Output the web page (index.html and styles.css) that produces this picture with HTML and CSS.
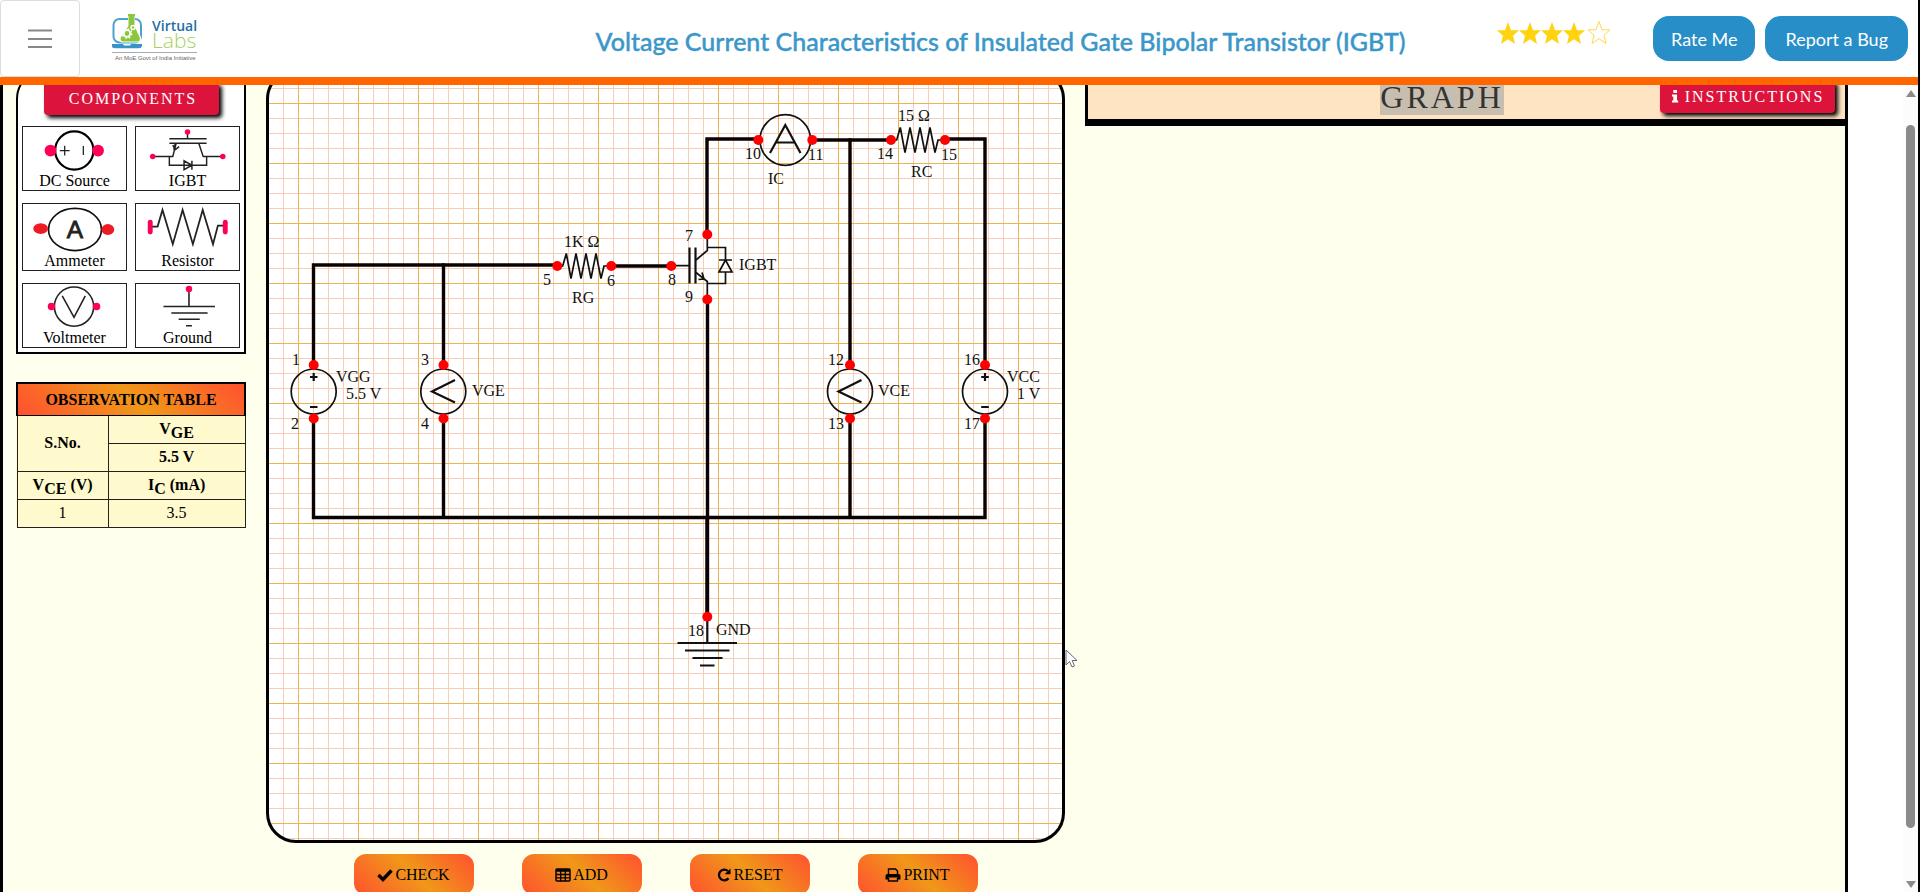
FILE: index.html
```html
<!DOCTYPE html>
<html lang="en">
<head>
<meta charset="utf-8">
<title>Voltage Current Characteristics of Insulated Gate Bipolar Transistor (IGBT)</title>
<link rel="stylesheet" href="styles.css">
</head>
<body>
<header class="topbar">
  <button class="menu-btn" aria-label="Menu">
    <svg width="24" height="20" viewBox="0 0 24 20"><path d="M0 1.5H24M0 10H24M0 18H24" stroke="#888" stroke-width="2"/></svg>
  </button>
  <a class="logo" href="#" aria-label="Virtual Labs">
    <svg width="88" height="52" viewBox="110 12 88 52">
      <rect x="113.500" y="19" width="27.500" height="23.500" rx="6" fill="none" stroke="#4ba3cc" stroke-width="2"/>
      <path d="M112 44H123L124 45.500H130L131 44H142V46Q141.500 48.200 139 48.200H115Q112 48.200 112 46Z" fill="#3a93c6"/>
      <path d="M127 14H136V16H135V26L141 37Q142 42 138 42.500H122Q118 42 120 37L128 26V16H127Z" fill="#fff"/>
      <path d="M128 14H135V16H134.500V26L139.500 37Q141 41.500 137 41.500H123.500Q119.500 41.500 121 37L128.500 26V16H128Z" fill="#8cc63f"/>
      <circle cx="127" cy="33.500" r="3.300" fill="none" stroke="#fff" stroke-width="1.800"/>
      <circle cx="127" cy="33.500" r="4.700" fill="none" stroke="#fff" stroke-width="1.400" stroke-dasharray="1.700 2"/>
      <circle cx="133" cy="27.500" r="2" fill="none" stroke="#fff" stroke-width="1.500"/>
      <text x="152" y="31" class="logo-virtual">Virtual</text>
      <text x="152" y="48" class="logo-labs">Labs</text>
      <path d="M112 52.500H197" stroke="#aaa"/>
      <text x="115" y="60" class="logo-tag">An MoE Govt of India Initiative</text>
    </svg>
  </a>
  <h1 class="title">Voltage Current Characteristics of Insulated Gate Bipolar Transistor (IGBT)</h1>
  <div class="stars" role="img" aria-label="Rated 4 out of 5">
    <svg width="114" height="24" viewBox="0 0 114 24">
      <defs><path id="star" d="M11 0L14 8.300H22L16 13.700L18 22L11 17.200L4 22L6 13.700L0 8.300H8Z"/></defs>
      <g fill="#ffd30f"><use href="#star" x="0" y="1"/><use href="#star" x="22" y="1"/><use href="#star" x="44" y="1"/><use href="#star" x="66" y="1"/></g>
      <use href="#star" x="91" y="0.500" fill="#fff" stroke="#ffd84a"/>
    </svg>
  </div>
  <div class="actions">
    <button class="pill pill-strong">Rate Me</button>
    <button class="pill">Report a Bug</button>
  </div>
</header>

<div class="viewport">
  <main class="lab">
    <aside class="side">
      <section class="components">
        <button class="tag-btn">COMPONENTS</button>
        <div class="parts">
          <figure class="part">
            <svg viewBox="22 126 105 46"><circle cx="74.300" cy="150" r="19.500" fill="#fff" stroke="#000" stroke-width="2.200"/><circle cx="50" cy="150" r="6" fill="#ff0055"/><circle cx="98.500" cy="150" r="6" fill="#ff0055"/><path d="M59.500 150H69.500M64.500 145V155M83.500 145.500V154.500" stroke="#222" stroke-width="1.300"/></svg>
            <figcaption>DC Source</figcaption>
          </figure>
          <figure class="part">
            <svg viewBox="135 126 105 46"><g fill="none" stroke="#222" stroke-width="1.500"><path d="M187.500 131V138M169 138H207M169 142.500H207M154 156H172.500L176 142.500M199 142.500L203.500 156H222M173.500 149L175 143M172.500 144.500L175 149L179 146"/><path d="M169 156V165H207V156M184 160.500V169.500L192 165ZM192 160.500V169.500"/></g><g fill="#ff0055"><circle cx="187.500" cy="131" r="2.800"/><circle cx="152" cy="156" r="2.800"/><circle cx="223.500" cy="156" r="2.800"/></g></svg>
            <figcaption>IGBT</figcaption>
          </figure>
          <figure class="part">
            <svg viewBox="22 203 105 49"><ellipse cx="75" cy="229" rx="27" ry="21.500" fill="#fff" stroke="#111" stroke-width="1.700"/><g fill="#ed1c24"><ellipse cx="40" cy="228" rx="7.500" ry="5.500"/><ellipse cx="108.500" cy="229" rx="6.500" ry="5.500"/></g><text x="75" y="238" class="amp">A</text></svg>
            <figcaption>Ammeter</figcaption>
          </figure>
          <figure class="part">
            <svg viewBox="135 203 105 49"><path d="M150 226H157L162 209L172.500 244L182.500 209L193 244L203 209L213.500 244L218.500 225H224" fill="none" stroke="#222" stroke-width="1.800"/><g fill="#ff0055"><rect x="147" y="219" width="5" height="15" rx="2.500"/><rect x="223.500" y="219" width="5" height="15" rx="2.500"/></g></svg>
            <figcaption>Resistor</figcaption>
          </figure>
          <figure class="part">
            <svg viewBox="22 283 105 46"><circle cx="74" cy="306" r="20" fill="#fff" stroke="#222" stroke-width="1.600"/><path d="M62 295L74 317L85.500 295" fill="none" stroke="#222" stroke-width="1.600"/><circle cx="51" cy="306" r="3.800" fill="#ff0055"/><circle cx="97" cy="306" r="3.800" fill="#ff0055"/></svg>
            <figcaption>Voltmeter</figcaption>
          </figure>
          <figure class="part">
            <svg viewBox="135 283 105 46"><path d="M189 288V306M163 306H215.500M171 312.500H208M178.500 319H200M186 325.500H192" stroke="#222" stroke-width="1.600"/><circle cx="189" cy="288" r="3.300" fill="#ff0055"/></svg>
            <figcaption>Ground</figcaption>
          </figure>
        </div>
      </section>

      <table class="obs">
        <colgroup><col class="c1"><col></colgroup>
        <thead><tr><th colspan="2" class="obs-title">OBSERVATION TABLE</th></tr></thead>
        <tbody>
          <tr><th rowspan="2">S.No.</th><th>V<sub>GE</sub></th></tr>
          <tr><th>5.5 V</th></tr>
          <tr><th>V<sub>CE</sub> (V)</th><th>I<sub>C</sub> (mA)</th></tr>
          <tr><td>1</td><td>3.5</td></tr>
        </tbody>
      </table>
    </aside>

    <section class="bench">
      <div class="canvas">
        <svg class="circuit" viewBox="269 72 793 768">
          <g class="wire">
            <path d="M313.500 365V265H557"/><path d="M443.500 265V365"/><path d="M611 266H671"/>
            <path d="M707 234V139H758"/><path d="M812 140H891"/><path d="M850 365V140"/><path d="M945 139H985V365"/>
            <path d="M313.500 418V517.500H985V418"/><path d="M443.500 418V517"/><path d="M850 418V517"/>
            <path d="M707.500 300V617"/><path d="M707 518V617"/>
          </g>
          <g class="thin">
            <circle cx="313.700" cy="391.500" r="22.500"/><circle cx="443.300" cy="391.500" r="22.500"/><circle cx="850" cy="391.500" r="22.500"/><circle cx="985" cy="391.500" r="22.500"/><circle cx="785.300" cy="140" r="25.300"/>
            <path d="M557 266H562.700L566.300 253.500L571 278.500L576 253.500L581 278.500L586 253.500L591 278.500L596 253.500L601 278.500L604 266H611"/>
            <path d="M891 140H896.700L900.300 127.500L905 152.500L910 127.500L915 152.500L920 127.500L925 152.500L930 127.500L935 152.500L938 140H945"/>
            <path d="M671 265.700H689M696 260L707.300 250.500V234M696 272.500L707.300 281.500V300M707.300 247.500H725.500V260M725.500 272V283.500H707.300M719 272H732L725.500 260ZM719 260H732M698.500 279.500L704 279L702 272.500"/>
          </g>
          <g class="mid">
            <path d="M689.500 247.500V283.500M695.500 247.500V283.500"/>
            <path d="M455 380L432 391.500L455 402.500M861.500 380L838.500 391.500L861.500 402.500"/>
            <path d="M770 153L785.300 125L800.500 153M776 142.500H795"/>
            <path d="M310 377H317.500M313.700 373V381M310 407H317.500M981.200 377H988.800M985 373V381M981.200 407H988.800"/>
            <path d="M707.300 617V643M677.500 643H737M685 650.500H729.500M692.500 658H722.500M700 665.500H714.500"/>
          </g>
          <g class="node">
            <circle cx="313.700" cy="365" r="5"/><circle cx="313.700" cy="418.500" r="5"/><circle cx="443.500" cy="365" r="5"/><circle cx="443.500" cy="418.500" r="5"/>
            <circle cx="557.300" cy="266" r="5"/><circle cx="611.300" cy="266" r="5"/><circle cx="671.300" cy="266" r="5"/><circle cx="707.300" cy="234.500" r="5"/><circle cx="707.300" cy="299.500" r="5"/>
            <circle cx="758.300" cy="140" r="5"/><circle cx="812.300" cy="140" r="5"/><circle cx="850" cy="365" r="5"/><circle cx="850" cy="418.500" r="5"/><circle cx="891" cy="140" r="5"/><circle cx="945" cy="140" r="5"/>
            <circle cx="985" cy="365" r="5"/><circle cx="985" cy="418.500" r="5"/><circle cx="707.300" cy="616.700" r="5"/>
          </g>
          <g class="label">
            <text x="292" y="365">1</text><text x="291" y="429">2</text><text x="336" y="382">VGG</text><text x="346" y="399">5.5 V</text>
            <text x="421" y="365">3</text><text x="421" y="429">4</text><text x="472" y="396">VGE</text>
            <text x="564" y="247">1K Ω</text><text x="543" y="285">5</text><text x="607" y="286">6</text><text x="572" y="303">RG</text>
            <text x="685" y="241">7</text><text x="668" y="285">8</text><text x="685" y="302">9</text><text x="739" y="270">IGBT</text>
            <text x="745" y="159">10</text><text x="808" y="160">11</text><text x="768" y="184">IC</text>
            <text x="877" y="159">14</text><text x="941" y="160">15</text><text x="898" y="121">15 Ω</text><text x="911" y="177">RC</text>
            <text x="828" y="365">12</text><text x="828" y="429">13</text><text x="878" y="396">VCE</text>
            <text x="964" y="365">16</text><text x="964" y="429">17</text><text x="1007" y="382">VCC</text><text x="1017" y="399">1 V</text>
            <text x="688" y="636">18</text><text x="716" y="635">GND</text>
          </g>
        </svg>
        <svg class="cursor" width="14" height="20" viewBox="0 0 14 20" aria-hidden="true"><path d="M1 1V16L4.500 12.500L7 18L9.500 17L7.200 11.500H12Z" fill="#fff" stroke="#667" stroke-width="1"/></svg>
      </div>
      <div class="tools">
        <button class="tool"><svg width="16" height="14" viewBox="0 0 16 14"><path d="M1.500 7L6 11.500L14.500 2.500" fill="none" stroke="#000" stroke-width="3.400"/></svg>CHECK</button>
        <button class="tool"><svg width="16" height="14" viewBox="0 0 16 14"><rect x="1" y="1" width="14" height="12" rx="1" fill="none" stroke="#000" stroke-width="1.500"/><path d="M1 2.500H15" stroke="#000" stroke-width="2.500"/><path d="M1 6.500H15M1 9.800H15M5.700 3V13M10.300 3V13" stroke="#000" stroke-width="1.300"/></svg>ADD</button>
        <button class="tool"><svg width="15" height="14" viewBox="0 0 15 14"><path d="M11.500 10.200A5.300 5.300 0 1 1 10.800 3" fill="none" stroke="#000" stroke-width="2.300"/><path d="M13.500 0.500V6.300H7.700Z"/></svg>RESET</button>
        <button class="tool"><svg width="16" height="14" viewBox="0 0 16 14"><path d="M3.500 7V1H10.500L12.500 3V7M3.500 10V13H12.500V10" fill="none" stroke="#000" stroke-width="1.400"/><path fill-rule="evenodd" d="M2.500 6H13.500Q15.500 6 15.500 8V11.500H12.500V9.500H3.500V11.500H0.500V8Q0.500 6 2.500 6Z"/></svg>PRINT</button>
      </div>
    </section>

    <section class="graph">
      <div class="graph-head">
        <h2><mark>GRAPH</mark></h2>
        <button class="tag-btn info"><svg width="8" height="13" viewBox="0 0 8 13"><path d="M2.300 0H6V3H2.300ZM1 4.500H6V10.500H7.200V12.500H1V10.500H2.300V6.500H1Z" fill="#fff"/></svg>INSTRUCTIONS</button>
      </div>
    </section>
  </main>
  <div class="gutter"></div>
  <div class="scroll" aria-hidden="true">
    <span class="up"></span><span class="thumb"></span><span class="down"></span>
  </div>
</div>
</body>
</html>
```
FILE: styles.css
```css
* { box-sizing: border-box; }
body {
  margin: 0;
  height: 100vh;
  display: flex;
  flex-direction: column;
  overflow: hidden;
  border-right: 2px solid #000;
  background: #fff;
  color: #000;
  font: 16px/18px "Liberation Serif", "Times New Roman", serif;
}
button { font: inherit; cursor: pointer; border: 0; padding: 0; }
svg { display: block; }

/* header */
.topbar {
  flex: none;
  position: relative;
  z-index: 2;
  display: flex;
  align-items: flex-start;
  height: 85px;
  background: #fff;
  border-bottom: 8px solid #ff6600;
  padding-right: 10px;
}
.menu-btn {
  width: 80px;
  height: 77px;
  display: flex;
  align-items: center;
  justify-content: center;
  background: #fff;
  border: 1px solid #ddd;
  border-radius: 4px;
}
.logo { margin: 12px 0 0 30px; }
.logo-virtual { font: 600 14px "Open Sans", sans-serif; fill: #2470a3; }
.logo-labs { font: 300 21px "Open Sans", sans-serif; fill: #a4d160; }
.logo-tag { font: 6px "Liberation Sans", sans-serif; fill: #666; }
.title {
  flex: 1;
  margin: 23px 0 0;
  padding-left: 306px;
  text-align: center;
  font: 500 25px/36px Lato, sans-serif;
  white-space: nowrap;
  color: #3b97c9;
  -webkit-text-stroke: 0.4px #3b97c9;
}
.stars { margin: 21px 42px 0 0; }
.actions { display: flex; gap: 10px; padding-top: 16px; }
.pill {
  height: 45px;
  padding: 0 20px;
  border-radius: 16px;
  background: #288ec8;
  color: #fff;
  font: 18px/20px Lato, sans-serif;
}
.pill-strong { padding: 0 18px; }

/* page body */
.viewport { flex: 1; min-height: 0; display: flex; overflow: hidden; }
.lab {
  flex: 1;
  display: grid;
  grid-template-columns: 230px 799px 1fr;
  column-gap: 20px;
  align-items: start;
  padding-left: 13px;
  border: solid #000;
  border-width: 0 3px;
  background: #ffffee;
}
.side, .bench { margin-top: -16px; }

.components {
  border: 2px solid #000;
  border-radius: 30px 0 0 0;
  background: #fff;
  padding: 11px 4px 4px;
}
.tag-btn {
  display: block;
  width: 175px;
  height: 33px;
  margin: 0 auto 11px 22px;
  padding-left: 3px;
  border-radius: 4px;
  background: #dc143c;
  color: #fff;
  letter-spacing: 2px;
  box-shadow: 3px 3px 4px #000;
}
.parts { display: grid; grid-template-columns: 1fr 1fr; gap: 12px 8px; }
.part { margin: 0; border: 1px solid #222; }
.part svg { width: 100%; height: auto; }
.part figcaption { text-align: center; }
.amp { font: 25px "Liberation Sans", sans-serif; text-anchor: middle; fill: #222; stroke: #222; stroke-width: 0.8; }

.obs {
  width: 100%;
  margin-top: 28px;
  border-collapse: collapse;
  table-layout: fixed;
  background: #fffacd;
  text-align: center;
}
.obs .c1 { width: 40%; }
.obs th, .obs td { height: 28px; padding: 0; border: 1px solid #222; }
.obs sub { line-height: 0; font-size: 16px; vertical-align: -4px; }
.obs .obs-title {
  height: 32px;
  border: 2px solid #000;
  border-bottom-width: 1px;
  background: linear-gradient(45deg, #ff512f, #f09819 51%, #ff512f);
}

.canvas {
  position: relative;
  border: 3px solid #000;
  border-radius: 30px;
  background-color: #fff;
  background-image:
    linear-gradient(90deg, #e8b455 1px, transparent 1px),
    linear-gradient(#e8b455 1px, transparent 1px),
    linear-gradient(90deg, #f8cdb8 1px, transparent 1px),
    linear-gradient(#f8cdb8 1px, transparent 1px);
  background-size: 60px 60px, 60px 60px, 15px 15px, 15px 15px;
  background-position: 29px 31px, 29px 31px, 14px 1px, 14px 1px;
}
.circuit { width: 100%; height: auto; }
.wire { fill: none; stroke: #0c0000; stroke-width: 3.4; stroke-linecap: square; }
.thin { fill: none; stroke: #111; stroke-width: 1.7; }
.mid { fill: none; stroke: #111; stroke-width: 2.2; }
.node { fill: #ff0000; }
.label { fill: #111; }
.cursor { position: absolute; left: 796px; top: 577px; }

.tools { display: flex; gap: 48px; justify-content: center; margin-top: 11px; }
.tool {
  width: 120px;
  height: 41px;
  display: flex;
  align-items: center;
  justify-content: center;
  gap: 2px;
  border-radius: 12px;
  background: linear-gradient(45deg, #ff512f, #f09819 51%, #ff512f);
  color: #000;
}

.graph-head {
  display: grid;
  grid-template-columns: 1fr auto;
  height: 41px;
  border-bottom: 7px solid #000;
  border-left: 3px solid #000;
  background: #ffe4c4;
}
.graph-head h2 {
  grid-area: 1 / 1 / 2 / 3;
  margin: -6px 0 0;
  padding-right: 49px;
  text-align: center;
  font-weight: 400;
  font-size: 32px;
  line-height: 36px;
  letter-spacing: 3px;
}
.graph-head mark { color: #333; background: #c8beb0; }
.info {
  grid-area: 1 / 2;
  display: flex;
  align-items: center;
  justify-content: center;
  gap: 6px;
  margin: -5px 10px 0 0;
  padding: 0;
}

.gutter { width: 55px; background: #fff; }
.scroll {
  width: 15px;
  display: flex;
  flex-direction: column;
  align-items: center;
  padding: 5px 0 4px;
  background: #fcfcfc;
}
.up, .down { border: 5px solid transparent; }
.up { border-top: 0; border-bottom: 7px solid #8a8a8a; }
.down { border-bottom: 0; border-top: 7px solid #8a8a8a; }
.thumb { flex: 1; width: 9px; margin: 28px 0 53px; border-radius: 5px; background: #8a8a8a; }
```
